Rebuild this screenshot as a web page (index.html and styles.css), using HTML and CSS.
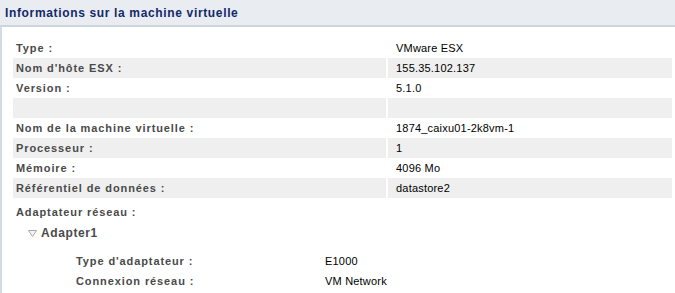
FILE: index.html
```html
<!DOCTYPE html>
<html lang="fr">
<head>
  <meta charset="UTF-8">
  <title>Informations sur la machine virtuelle</title>
  <link rel="stylesheet" href="styles.css">
</head>
<body>
  <div class="panel">
    <div class="panel-header">Informations sur la machine virtuelle</div>
    <div class="panel-body">
      <table class="props">
        <tr><td class="label">Type :</td><td class="value">VMware ESX</td></tr>
        <tr class="alt"><td class="label">Nom d'hôte ESX :</td><td class="value">155.35.102.137</td></tr>
        <tr><td class="label">Version :</td><td class="value">5.1.0</td></tr>
        <tr class="alt"><td class="label"></td><td class="value"></td></tr>
        <tr><td class="label">Nom de la machine virtuelle :</td><td class="value">1874_caixu01-2k8vm-1</td></tr>
        <tr class="alt"><td class="label">Processeur :</td><td class="value">1</td></tr>
        <tr><td class="label">Mémoire :</td><td class="value">4096 Mo</td></tr>
        <tr class="alt"><td class="label">Référentiel de données :</td><td class="value">datastore2</td></tr>
      </table>

      <div class="section-label">Adaptateur réseau :</div>
      <div class="adapter">
        <div class="adapter-title">
          <svg class="twisty" width="9" height="7" viewBox="0 0 9 7">
            <path d="M0.5 0.5 H8.5 L4.5 6.5 Z" fill="#f4f4f4" stroke="#a8a8a8" stroke-width="1"/>
          </svg>
          Adapter1
        </div>
        <div class="adapter-props">
          <div class="sub-row"><span class="sub-label">Type d'adaptateur :</span><span class="sub-value">E1000</span></div>
          <div class="sub-row"><span class="sub-label">Connexion réseau :</span><span class="sub-value">VM Network</span></div>
        </div>
      </div>
    </div>
  </div>
</body>
</html>
```

FILE: styles.css
```css
* {
  margin: 0;
  padding: 0;
  box-sizing: border-box;
}

body {
  font-family: "Liberation Sans", Arial, sans-serif;
  font-size: 11px;
  color: #000;
  background: #fff;
  width: 675px;
  height: 293px;
  overflow: hidden;
}

.panel-header {
  height: 27px;
  padding: 6px 0 0 5px;
  background-color: #e9edf1;
  border-bottom: 2px solid #cdd5dd;
  color: #14286a;
  font-size: 12px;
  font-weight: bold;
  letter-spacing: 0.65px;
}

.panel-body {
  border-left: 2px solid #d3dbe4;
  padding: 11px 3px 0 11px;
  height: 266px;
}

.props {
  width: 659px;
  border-collapse: separate;
  border-spacing: 0;
}

.props td {
  height: 20px;
  padding: 0 0 0 3px;
  vertical-align: middle;
}

.props .label {
  width: 375px;
  color: #4a4a4a;
  font-weight: bold;
  letter-spacing: 0.9px;
  border-right: 2px solid #fff;
}

.props .value {
  padding-left: 8px;
  letter-spacing: 0.2px;
}

.props .alt td {
  background-color: #efefef;
}

.section-label {
  margin-top: 3px;
  padding-left: 3px;
  height: 22px;
  line-height: 22px;
  color: #4a4a4a;
  font-weight: bold;
  letter-spacing: 0.9px;
}

.adapter-title {
  display: flex;
  align-items: center;
  gap: 4px;
  height: 20px;
  padding-left: 15px;
  color: #4a4a4a;
  font-weight: bold;
  font-size: 12px;
  letter-spacing: 0.6px;
}

.adapter-props {
  padding: 8px 0 0 63px;
}

.sub-row {
  display: flex;
  height: 20px;
  align-items: center;
}

.sub-label {
  width: 249px;
  color: #4a4a4a;
  font-weight: bold;
  letter-spacing: 0.9px;
}

.sub-value {
  letter-spacing: 0.2px;
}
```
